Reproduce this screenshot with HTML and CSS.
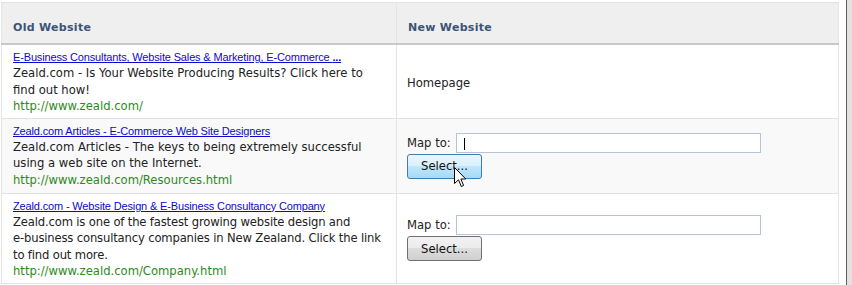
FILE: index.html
```html
<!DOCTYPE html>
<html>
<head>
<meta charset="utf-8">
<title>Website Mapping</title>
<link rel="stylesheet" href="styles.css">
</head>
<body>
<div class="window">
  <div class="page">
    <table class="map-table">
      <thead>
        <tr>
          <th class="col-old">Old Website</th>
          <th class="col-new">New Website</th>
        </tr>
      </thead>
      <tbody>
        <tr>
          <td class="old">
            <a class="title" href="#">E-Business Consultants, Website Sales &amp; Marketing, E-Commerce <b>...</b></a>
            <div class="desc">Zeald.com - Is Your Website Producing Results? Click here to find out how!</div>
            <div class="url">http://www.zeald.com/</div>
          </td>
          <td class="new home"><span class="plain">Homepage</span></td>
        </tr>
        <tr class="alt">
          <td class="old">
            <a class="title" href="#">Zeald.com Articles - E-Commerce Web Site Designers</a>
            <div class="desc">Zeald.com Articles - The keys to being extremely successful using a web site on the Internet.</div>
            <div class="url">http://www.zeald.com/Resources.html</div>
          </td>
          <td class="new">
            <div class="map-row">
              <label class="map-label">Map to:</label>
              <span class="field"><input class="map-input" type="text"><span class="caret"></span></span>
            </div>
            <span class="btn-wrap">
              <button class="btn btn-hover" type="button">Select...</button>
              <svg class="pointer" width="13" height="21" viewBox="0 0 13 21"><path d="M0.5 0.5 L0.5 16.5 L4.5 12.8 L7.3 19.5 L9.6 18.5 L6.9 12 L11.8 12 Z" fill="#fff" stroke="#000" stroke-width="1" stroke-linejoin="miter"/></svg>
            </span>
          </td>
        </tr>
        <tr>
          <td class="old">
            <a class="title" href="#">Zeald.com - Website Design &amp; E-Business Consultancy Company</a>
            <div class="desc desc-tight">Zeald.com is one of the fastest growing website design and e&#8209;business consultancy companies in New Zealand. Click the link to find out more.</div>
            <div class="url">http://www.zeald.com/Company.html</div>
          </td>
          <td class="new">
            <div class="map-row">
              <label class="map-label">Map to:</label>
              <span class="field"><input class="map-input" type="text"></span>
            </div>
            <button class="btn" type="button">Select...</button>
          </td>
        </tr>
      </tbody>
    </table>
  </div>
  <div class="frame-edge"></div>
</div>
</body>
</html>
```

FILE: styles.css
```css
html, body {
  margin: 0;
  padding: 0;
  background: #ffffff;
}
body {
  font-family: "DejaVu Sans", Verdana, sans-serif;
  font-size: 11.6px;
  color: #222222;
}
.window {
  display: flex;
  width: 852px;
  height: 285px;
  overflow: hidden;
}
.page {
  width: 846px;
  padding: 2px 0 0 1px;
  box-sizing: border-box;
}
.frame-edge {
  flex: 1;
  border-left: 1px solid #5e5e5e;
  background: #e4e2df;
}
.map-table {
  width: 838px;
  border-collapse: collapse;
  border-top: 1px solid #e2e2e2;
  border-left: 1px solid #e6e6e6;
  border-right: 1px solid #e6e6e6;
}
.map-table th {
  background: #efefef;
  text-align: left;
  font-size: 11px;
  font-weight: bold;
  line-height: 14px;
  color: #3d5477;
  letter-spacing: 0.3px;
  padding: 18px 10px 8px 11px;
  border-bottom: 2px solid #c8c8c8;
}
.map-table th.col-old {
  width: 373px;
  border-right: 1px solid #e4e4e4;
}
.map-table td {
  border-bottom: 1px solid #e2e2e2;
}
.map-table tr.alt td {
  background: #f9f9f9;
}
td.old {
  vertical-align: top;
  padding: 5px 10px 3px 11px;
  border-right: 1px solid #e4e4e4;
}
td.new {
  vertical-align: middle;
  padding: 14px 10px;
}
td.home {
  padding-top: 18px;
}
.title {
  display: block;
  font-family: "Liberation Sans", Arial, sans-serif;
  font-size: 11px;
  letter-spacing: -0.15px;
  line-height: 15px;
  color: #0a0acc;
  text-decoration: underline;
}
.desc, .url {
  line-height: 16.5px;
}
.desc-tight {
  letter-spacing: -0.16px;
}
.url {
  color: #2d8a1a;
}
.plain {
  line-height: 16px;
}
.map-row {
  display: flex;
  align-items: center;
  gap: 5px;
}
.map-label {
  line-height: 16px;
}
.field {
  position: relative;
  display: inline-block;
}
.map-input {
  display: block;
  width: 305px;
  height: 20px;
  box-sizing: border-box;
  border: 1px solid #b5c5d5;
  margin: 0;
  padding: 0 4px;
  background: #ffffff;
  font-family: "DejaVu Sans", Verdana, sans-serif;
  font-size: 12px;
}
.caret {
  position: absolute;
  left: 8px;
  top: 5px;
  width: 1px;
  height: 12px;
  background: #000000;
}
.btn-wrap {
  position: relative;
  display: inline-block;
  vertical-align: top;
}
.btn {
  display: block;
  margin-top: 1px;
  width: 75px;
  height: 25px;
  box-sizing: border-box;
  border: 1px solid #707070;
  border-radius: 3px;
  background: linear-gradient(#f2f2f2 0%, #ebebeb 50%, #dddddd 50%, #cfcfcf 100%);
  font-family: "DejaVu Sans", Verdana, sans-serif;
  font-size: 11.6px;
  color: #111111;
  padding: 0;
}
.btn-hover {
  border-color: #3c7fb1;
  background: linear-gradient(#eaf6fd 0%, #d9f0fc 50%, #bee6fd 50%, #a7d9f5 100%);
}
.pointer {
  position: absolute;
  left: 47px;
  top: 14px;
}
```
